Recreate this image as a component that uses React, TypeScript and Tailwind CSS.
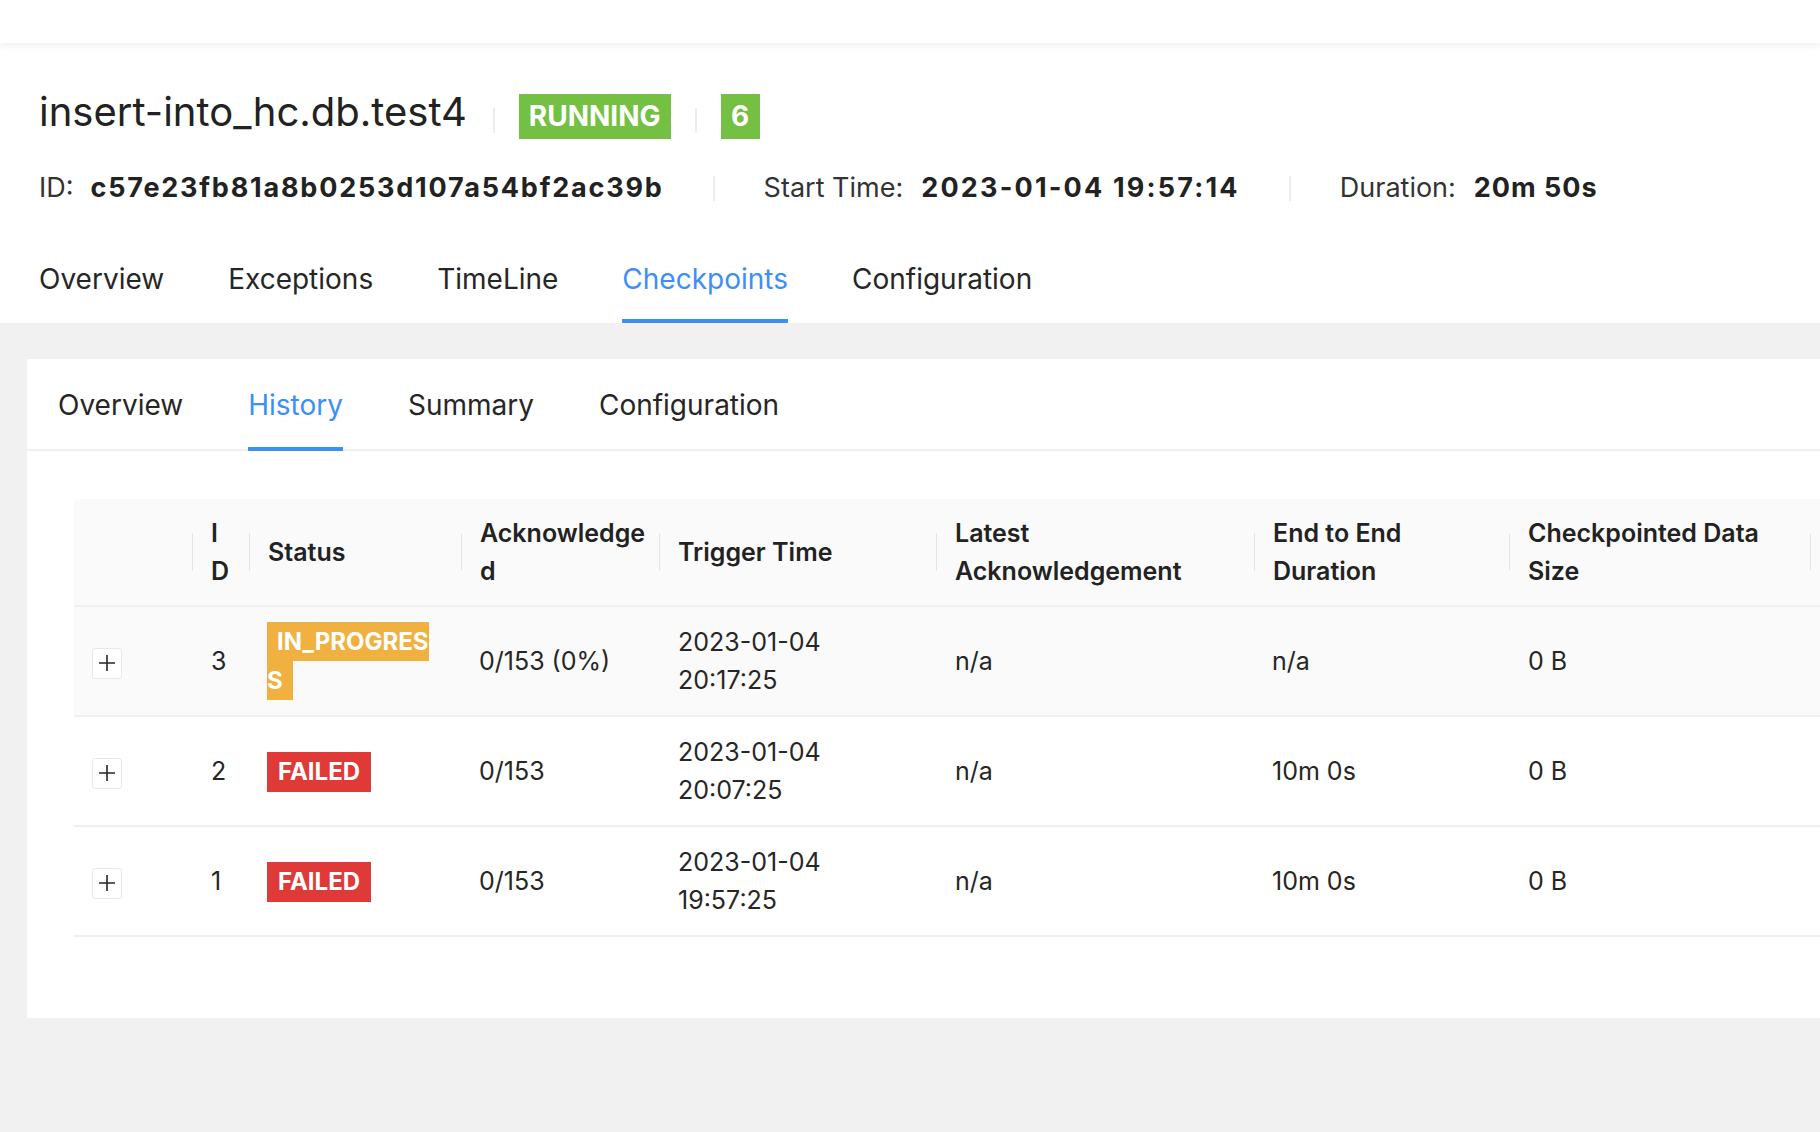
import React from 'react';

type Row = {
  id: number;
  status: 'IN_PROGRESS' | 'FAILED';
  ack: string;
  date: string;
  time: string;
  latest: string;
  e2e: string;
  size: string;
  hover?: boolean;
};

const rows: Row[] = [
  { id: 3, status: 'IN_PROGRESS', ack: '0/153 (0%)', date: '2023-01-04', time: '20:17:25', latest: 'n/a', e2e: 'n/a', size: '0 B', hover: true },
  { id: 2, status: 'FAILED', ack: '0/153', date: '2023-01-04', time: '20:07:25', latest: 'n/a', e2e: '10m 0s', size: '0 B' },
  { id: 1, status: 'FAILED', ack: '0/153', date: '2023-01-04', time: '19:57:25', latest: 'n/a', e2e: '10m 0s', size: '0 B' },
];

const jobTabs = ['Overview', 'Exceptions', 'TimeLine', 'Checkpoints', 'Configuration'];
const cpTabs = ['Overview', 'History', 'Summary', 'Configuration'];

const Divider = ({ className = '' }: { className?: string }) => (
  <div className={`w-[2px] h-[25px] bg-[#ededed] ${className}`} />
);

const PlusButton = () => (
  <span className="inline-flex items-center justify-center w-[30px] h-[31px] bg-white border border-[#e8e8e8] rounded-[3px] align-middle">
    <svg width="18" height="18" viewBox="0 0 18 18" fill="none" stroke="#262626" strokeWidth="1.6">
      <path d="M9 1v16M1 9h16" />
    </svg>
  </span>
);

const HeadCell = ({ children, divider = true }: { children?: React.ReactNode; divider?: boolean }) => (
  <th className="relative text-left align-middle font-semibold pl-[18px] pr-[14px] py-[15px] leading-[38px] [overflow-wrap:anywhere]">
    {children}
    {divider && (
      <span className="absolute right-0 top-1/2 -translate-y-1/2 w-px h-[37px] bg-[#e4e4e4]" />
    )}
  </th>
);

export default function App() {
  return (
    <div className="w-[1820px] h-[1132px] overflow-hidden bg-[#f1f1f1] text-[#262626] [font-family:Inter,'Noto_Sans',sans-serif]">
      {/* top bar */}
      <div className="h-[43px] bg-white relative z-10 shadow-[0_2px_8px_rgba(0,0,0,0.07)]" />

      {/* job header */}
      <div className="bg-white pl-[39px]">
        <div className="pt-[39px] flex items-baseline">
          <h1 className="text-[40px] font-normal text-[#222]">insert-into_hc.db.test4</h1>
          <Divider className="self-end mb-[9px] ml-[26px] mr-[24px]" />
          <span className="inline-flex items-center h-[45px] px-[10px] bg-[#73c042] text-white text-[28px] font-bold">
            RUNNING
          </span>
          <Divider className="self-end mb-[9px] ml-[24px] mr-[24px]" />
          <span className="inline-flex items-center justify-center h-[45px] w-[39px] bg-[#73c042] text-white text-[28px] font-bold">
            6
          </span>
        </div>

        <div className="mt-[26px] flex items-center text-[27px] leading-[40px]">
          <span className="text-[#333]">ID:</span>
          <span className="ml-[17px] font-bold text-[#222] tracking-[1.8px]">c57e23fb81a8b0253d107a54bf2ac39b</span>
          <Divider className="mx-[49px]" />
          <span className="text-[#333]">Start Time:</span>
          <span className="ml-[18px] font-bold text-[#222] tracking-[2.2px]">2023-01-04 19:57:14</span>
          <Divider className="mx-[49px]" />
          <span className="text-[#333]">Duration:</span>
          <span className="ml-[18px] font-bold text-[#222] tracking-[1px]">20m 50s</span>
        </div>

        <div className="mt-[51px] flex gap-[64px] text-[28px] leading-[40px]">
          {jobTabs.map((t) => (
            <div
              key={t}
              className={`pb-[20px] border-b-[4px] ${
                t === 'Checkpoints' ? 'text-[#3e8ef7] border-[#3e8ef7]' : 'text-[#262626] border-transparent'
              }`}
            >
              {t}
            </div>
          ))}
        </div>
      </div>

      {/* checkpoints card */}
      <div className="mt-[36px] ml-[27px] w-[2300px] bg-white pb-[81px]">
        <div className="flex gap-[65px] pl-[31px] border-b-2 border-[#f0f0f0] text-[28px] leading-[40px]">
          {cpTabs.map((t) => (
            <div
              key={t}
              className={`pt-[26px] pb-[22px] -mb-[2px] border-b-[4px] ${
                t === 'History' ? 'text-[#3e8ef7] border-[#3e8ef7]' : 'text-[#262626] border-transparent'
              }`}
            >
              {t}
            </div>
          ))}
        </div>

        <div className="pt-[48px] pl-[47px]">
          <table className="table-fixed border-collapse text-[25px] leading-[38px] w-[2037px]">
            <colgroup>
              <col className="w-[119px]" />
              <col className="w-[57px]" />
              <col className="w-[212px]" />
              <col className="w-[198px]" />
              <col className="w-[277px]" />
              <col className="w-[318px]" />
              <col className="w-[255px]" />
              <col className="w-[301px]" />
              <col className="w-[300px]" />
            </colgroup>
            <thead>
              <tr className="bg-[#fafafa] border-b-2 border-[#f0f0f0] text-[#222]">
                <HeadCell />
                <HeadCell>I<br />D</HeadCell>
                <HeadCell>Status</HeadCell>
                <HeadCell>Acknowledge<br />d</HeadCell>
                <HeadCell>Trigger Time</HeadCell>
                <HeadCell>Latest<br />Acknowledgement</HeadCell>
                <HeadCell>End to End<br />Duration</HeadCell>
                <HeadCell>Checkpointed Data<br />Size</HeadCell>
                <HeadCell divider={false} />
              </tr>
            </thead>
            <tbody>
              {rows.map((r) => (
                <tr key={r.id} className={`h-[110px] border-b-2 border-[#f0f0f0] ${r.hover ? 'bg-[#fafafa]' : 'bg-white'}`}>
                  <td className="pl-[18px] py-[15px] align-middle">
                    <PlusButton />
                  </td>
                  <td className="pl-[18px] py-[15px] align-middle">{r.id}</td>
                  <td className="pl-[17px] pr-[14px] py-[15px] align-middle">
                    {r.status === 'IN_PROGRESS' ? (
                      <span className="bg-[#f0b141] text-white font-bold text-[24px] px-[10px] py-[5px]">
                        IN_PROGRES<br />S
                      </span>
                    ) : (
                      <span className="inline-flex items-center h-[40px] px-[11px] bg-[#e03a38] text-white font-bold text-[24px] align-middle">
                        FAILED
                      </span>
                    )}
                  </td>
                  <td className="pl-[17px] py-[15px] align-middle">{r.ack}</td>
                  <td className="pl-[18px] py-[15px] align-middle">
                    <div>{r.date}</div>
                    <div>{r.time}</div>
                  </td>
                  <td className="pl-[18px] py-[15px] align-middle">{r.latest}</td>
                  <td className="pl-[17px] py-[15px] align-middle">{r.e2e}</td>
                  <td className="pl-[18px] py-[15px] align-middle">{r.size}</td>
                  <td className="py-[15px]" />
                </tr>
              ))}
            </tbody>
          </table>
        </div>
      </div>
    </div>
  );
}
